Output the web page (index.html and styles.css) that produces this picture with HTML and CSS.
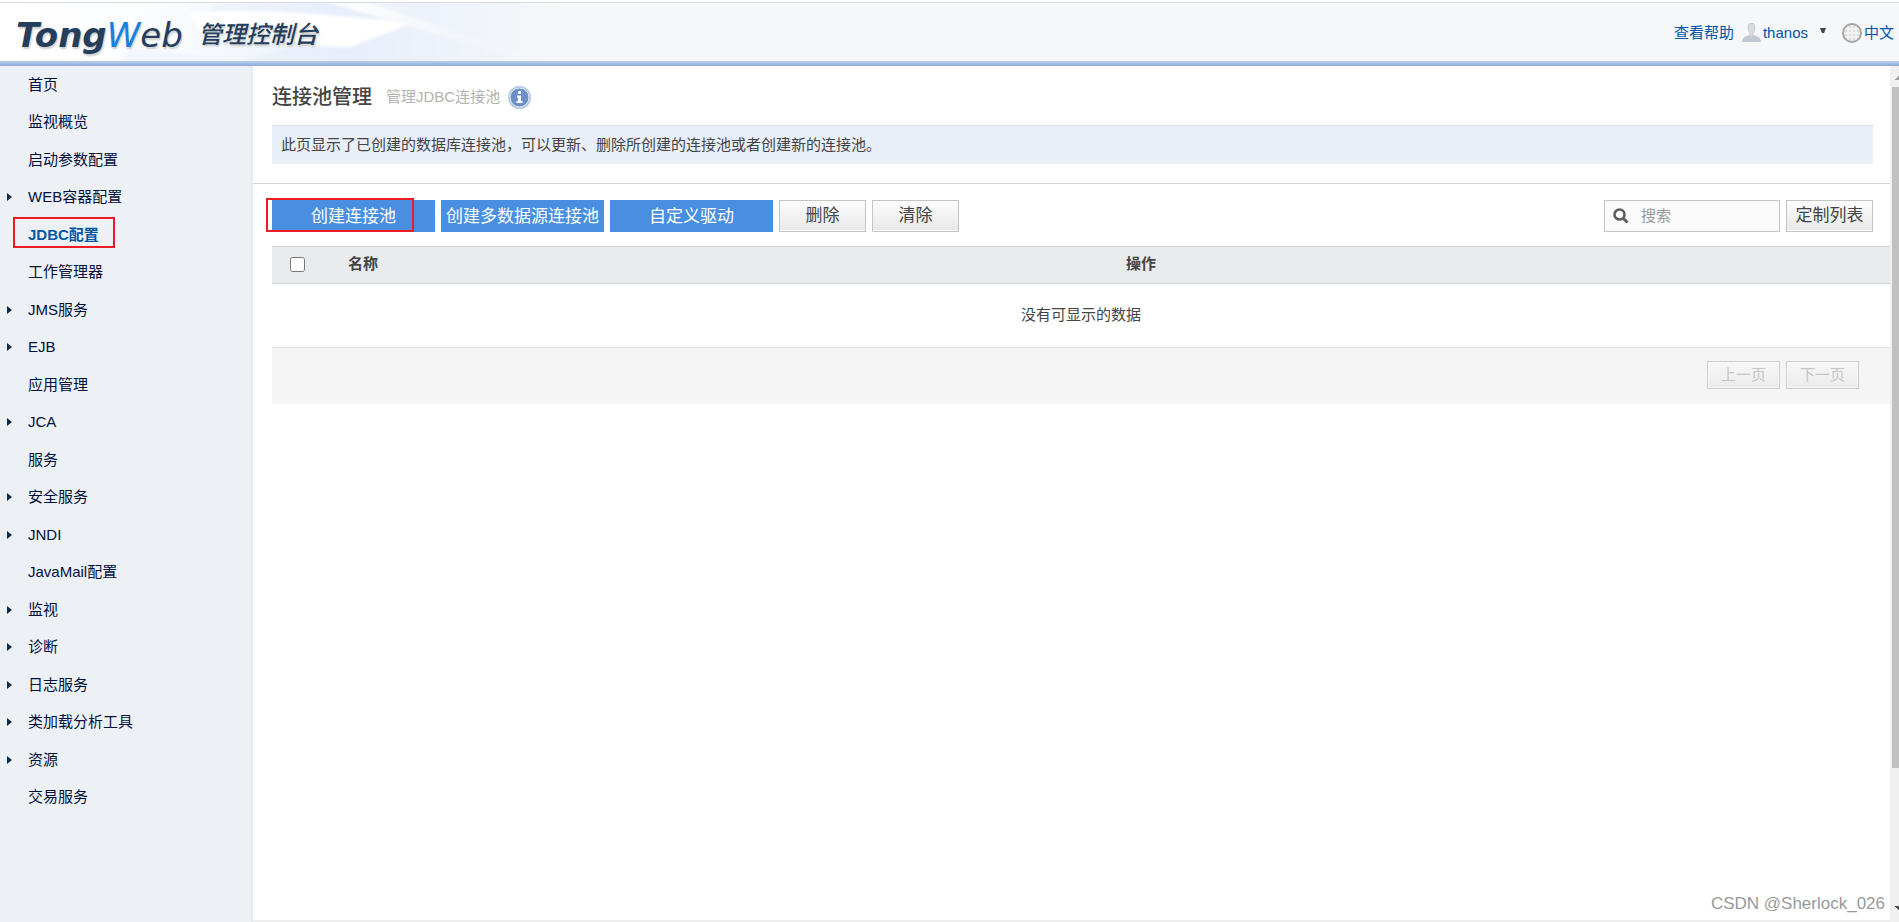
FILE: index.html
```html
<!DOCTYPE html>
<html lang="zh-CN">
<head>
<meta charset="utf-8">
<title>TongWeb 管理控制台</title>
<link rel="stylesheet" href="styles.css">
</head>
<body>
<header class="topbar">
  <svg class="topbar-art" width="560" height="58" viewBox="0 0 560 58" aria-hidden="true">
    <defs>
      <linearGradient id="haze" x1="0" x2="1" y1="0" y2="0"><stop offset="0" stop-color="#fff"/><stop offset=".25" stop-color="#fcfdff"/><stop offset=".5" stop-color="#f0f4fc"/><stop offset=".75" stop-color="#edf2fb"/><stop offset="1" stop-color="#f6f7f9"/></linearGradient>
      <linearGradient id="beam" gradientUnits="userSpaceOnUse" x1="180" x2="560" y1="0" y2="0"><stop offset="0" stop-color="#e9effb" stop-opacity=".3"/><stop offset=".45" stop-color="#e7eefb"/><stop offset="1" stop-color="#f6f7f9"/></linearGradient>
      <linearGradient id="streak" gradientUnits="userSpaceOnUse" x1="330" x2="540" y1="0" y2="0"><stop offset="0" stop-color="#fff"/><stop offset="1" stop-color="#f6f7f9" stop-opacity="0"/></linearGradient>
      <filter id="soft"><feGaussianBlur stdDeviation="1.500"/></filter>
    </defs>
    <rect width="560" height="58" fill="url(#haze)"/>
    <g filter="url(#soft)">
      <path d="M350 46L430 20L560 58H240L300 42Z" fill="url(#beam)"/>
      <path d="M220 0H345L425 22L350 46L200 12Z" fill="url(#beam)"/>
      <path d="M190 10C270 4 350 14 412 20L350 44L330 43L200 30Z" fill="#fff"/>
      <path d="M330 0H370L540 56H520Z" fill="url(#streak)"/>
      <path d="M130 45L230 55L260 60H120Z" fill="#f2f6fd"/>
    </g>
  </svg>
  <h1 class="logo"><span class="logo-name">Tong<span class="logo-web"><span class="logo-w">W</span>eb</span></span><span class="logo-title">管理控制台</span></h1>
  <nav class="topbar-links">
    <a href="#help">查看帮助</a>
    <a class="user" href="#user">
      <svg width="19" height="19" viewBox="0 0 19 19" aria-hidden="true"><path d="M9.500 0C6.500 0 5.500 2 5.800 5C6 8 7 9 7.500 10V12C5 13 0 13.500 0 19H19C19 13.500 14 13 11.500 12V10C12.500 9 13.200 8 13.300 5C13.500 2 12.500 0 9.500 0Z" fill="#c3c8d1"/><path d="M9.500 1C7 1 6.500 3 6.800 5C7 8 8 9 8.500 10.500V13L9.500 14L10.500 13V10.500C11.500 9 12.200 7 12.300 5C12.500 3 12 1 9.500 1Z" fill="#dcdcdc"/></svg>
      <span>thanos</span>
      <svg class="caret" width="6" height="6" viewBox="0 0 6 6" aria-hidden="true"><path d="M0 0H6L4 5H2Z" fill="#444"/></svg>
    </a>
    <a class="lang" href="#lang">
      <svg width="20" height="20" viewBox="0 0 20 20" aria-hidden="true"><circle cx="10" cy="10" r="9" fill="#dedede" stroke="#a2a2a2" stroke-width="1.800"/><path d="M10 2V18M2 10H18M3 6H17M3 14H17M6 3V17M14 3V17" stroke="#fff" fill="none"/></svg>
      <span>中文</span>
    </a>
  </nav>
</header>
<div class="shell">
  <nav class="sidebar" aria-label="主菜单">
    <ul class="menu">
      <li><a href="#m">首页</a></li>
      <li><a href="#m">监视概览</a></li>
      <li><a href="#m">启动参数配置</a></li>
      <li class="parent"><a href="#m">WEB容器配置</a></li>
      <li class="current"><a href="#m">JDBC配置</a></li>
      <li><a href="#m">工作管理器</a></li>
      <li class="parent"><a href="#m">JMS服务</a></li>
      <li class="parent"><a href="#m">EJB</a></li>
      <li><a href="#m">应用管理</a></li>
      <li class="parent"><a href="#m">JCA</a></li>
      <li><a href="#m">服务</a></li>
      <li class="parent"><a href="#m">安全服务</a></li>
      <li class="parent"><a href="#m">JNDI</a></li>
      <li><a href="#m">JavaMail配置</a></li>
      <li class="parent"><a href="#m">监视</a></li>
      <li class="parent"><a href="#m">诊断</a></li>
      <li class="parent"><a href="#m">日志服务</a></li>
      <li class="parent"><a href="#m">类加载分析工具</a></li>
      <li class="parent"><a href="#m">资源</a></li>
      <li><a href="#m">交易服务</a></li>
    </ul>
  </nav>
  <main class="content">
    <section class="intro">
      <div class="heading">
        <h2>连接池管理</h2>
        <span class="subtitle">管理JDBC连接池</span>
        <svg width="23" height="23" viewBox="0 0 23 23" aria-hidden="true"><circle cx="11.500" cy="11.500" r="11.500" fill="#b4c8e4"/><circle cx="11.500" cy="11.500" r="9.500" fill="#6b8fc6" stroke="#e4ecf7"/><path d="M10 5H13V8H10ZM9 9.500H13V15H14.500V17H8.500V15H10V11.500H9Z" fill="#fff"/></svg>
      </div>
      <p class="notice">此页显示了已创建的数据库连接池，可以更新、删除所创建的连接池或者创建新的连接池。</p>
    </section>
    <div class="toolbar">
      <div class="create"><button class="btn primary">创建连接池</button><span class="highlight"></span></div>
      <button class="btn primary">创建多数据源连接池</button>
      <button class="btn primary">自定义驱动</button>
      <button class="btn plain">删除</button>
      <button class="btn plain">清除</button>
      <div class="search">
        <svg width="16" height="16" viewBox="0 0 16 16" aria-hidden="true"><circle cx="6.500" cy="6.500" r="5" fill="none" stroke="#5e5e5e" stroke-width="2.600"/><path d="M10 10L14.500 14.500" stroke="#5e5e5e" stroke-width="3"/></svg>
        <input type="text" placeholder="搜索" aria-label="搜索">
      </div>
      <button class="btn plain">定制列表</button>
    </div>
    <table class="grid">
      <thead><tr><th class="check"><input type="checkbox" aria-label="全选"></th><th class="name">名称</th><th>操作</th></tr></thead>
      <tbody><tr><td colspan="3">没有可显示的数据</td></tr></tbody>
    </table>
    <div class="pager"><button class="page" disabled>上一页</button><button class="page" disabled>下一页</button></div>
    <div class="watermark">CSDN @Sherlock_026</div>
  </main>
  <div class="scrollbar" aria-hidden="true"><span class="arrow up"></span><span class="thumb"></span><span class="arrow down"></span></div>
</div>
</body>
</html>
```
FILE: styles.css
```css
*, *::before, *::after { box-sizing: border-box; }
body {
  margin: 0;
  height: 100vh;
  display: flex;
  flex-direction: column;
  overflow: hidden;
  background: #fff;
  color: #444;
  font: 15px/20px "Liberation Sans", "Noto Sans CJK SC", sans-serif;
}
a { color: inherit; text-decoration: none; }
button, input { font: inherit; color: inherit; }

.topbar {
  position: relative;
  display: flex;
  justify-content: space-between;
  align-items: center;
  height: 66px;
  flex: none;
  padding: 0 5px 5px 16px;
  background: linear-gradient(#b9d0ee, #8eaad6) bottom / 100% 5px no-repeat, #f6f7f9;
  box-shadow: inset 0 2px #fff, inset 0 3px #d8dbe0;
}
.topbar-art { position: absolute; left: 0; top: 3px; }
.logo {
  position: relative;
  display: flex;
  align-items: center;
  margin: 8px 0 0;
  color: #243e5c;
  font-size: 24px;
  line-height: 36px;
  font-style: italic;
  text-shadow: 1px 2px 2px #ccc;
}
.logo-name { width: 182px; font: italic bold 34px/36px "DejaVu Sans", sans-serif; }
.logo-web { font-weight: normal; }
.logo-w { color: #1583dc; }
.logo-title { font-weight: 500; }
.topbar-links { position: relative; display: flex; align-items: center; color: #05a; padding-top: 4px; gap: 8px; }
.topbar-links a { display: flex; align-items: center; gap: 2px; }
.topbar-links .user { margin-right: 8px; }
.caret { margin: 0 0 4px 10px; }

.shell { display: flex; flex: 1; min-height: 0; }
.sidebar {
  width: 253px;
  flex: none;
  background: #edf1f6;
  border-right: 2px solid #e6eaf2;
}
.menu {
  display: grid;
  grid-auto-rows: 1fr;
  height: 750px;
  margin: 0;
  padding: 0;
  list-style: none;
  color: #00103c;
}
.menu li { position: relative; display: flex; align-items: center; padding-left: 28px; }
.parent::before {
  content: "";
  position: absolute;
  left: 7px;
  border: 4px solid transparent;
  border-left: 5px solid #0a2c48;
  border-right: 0;
}
.current { color: #0558a6; font-weight: bold; }
.current::after {
  content: "";
  position: absolute;
  left: 13px;
  top: 1px;
  width: 102px;
  height: 31px;
  border: 2px solid #ed1c24;
}

.content { position: relative; flex: 1; min-width: 0; border-bottom: 2px solid #eee; }
.intro { padding: 19px 17px 19px 19px; border-bottom: 1px solid #d6d6da; }
.heading { display: flex; align-items: center; height: 24px; }
.heading h2 { margin: 0; font-size: 20px; font-weight: 500; line-height: 24px; }
.subtitle { margin: 0 8px 0 14px; color: #b2b2b2; }
.notice {
  margin: 16px 0 0;
  padding: 9px;
  background: #e8eff8;
  border-top: 1px dotted #ccd3dc;
}
.toolbar { display: flex; gap: 6px; padding: 16px 17px 14px 19px; }
.create { position: relative; display: flex; }
.highlight {
  position: absolute;
  left: -6px;
  top: -2px;
  width: 148px;
  height: 34px;
  border: 2px solid #ed1c24;
}
.btn { height: 32px; padding: 0; border: 0; font-size: 17px; line-height: 24px; white-space: nowrap; }
.primary { width: 163px; padding-top: 2px; background: #488fe1; color: #fff; }
.plain {
  width: 87px;
  border: 1px solid #c4c4c4;
  background: linear-gradient(#fcfcfc, #e8e8e8);
  box-shadow: inset 0 -1px #fff;
}
.search {
  display: flex;
  align-items: center;
  gap: 12px;
  width: 176px;
  margin-left: auto;
  padding: 0 8px;
  border: 1px solid #c4c4c4;
  background: #fbfbfb;
}
.search svg { flex: none; }
.search input { width: 100%; min-width: 0; padding: 0; border: 0; background: none; outline: 0; }
.search input::placeholder { color: #999; }

.grid { width: calc(100% - 19px); margin-left: 19px; border-collapse: collapse; table-layout: fixed; }
.grid th {
  height: 37px;
  padding: 0 0 2px;
  background: #e9eaec;
  border: solid #d0d2d4;
  border-width: 1px 0;
}
.grid .check { width: 76px; text-align: left; padding-left: 18px; }
.check input { display: block; width: 15px; height: 15px; margin: 0; }
.grid .name { width: 45%; text-align: left; }
.grid th:last-child { text-align: left; padding-left: 50px; }
.grid td { height: 63px; padding: 0; text-align: center; }
.pager {
  display: flex;
  justify-content: flex-end;
  gap: 6px;
  margin-left: 19px;
  padding: 13px 31px 15px;
  background: #f5f5f5;
  border-top: 1px solid #e2e2e2;
}
.page {
  width: 73px;
  height: 28px;
  padding: 0;
  border: 1px solid #ccc;
  background: linear-gradient(#f7f7f7, #ebebeb);
  box-shadow: inset 0 0 0 1px #fafafa;
  color: #c6c6c6;
}
.watermark {
  position: absolute;
  right: 5px;
  bottom: 4px;
  font-size: 17px;
  line-height: 24px;
  color: #999;
}
.scrollbar {
  display: flex;
  flex-direction: column;
  align-items: flex-end;
  width: 9px;
  flex: none;
  background: #f0f0f0;
  overflow: hidden;
}
.thumb { width: 7px; height: 79.500%; background: #c1c1c1; }
.arrow { flex: none; width: 4px; height: 4px; margin: 10px 0 7px; }
.up { background: linear-gradient(135deg, transparent 50%, #a3a3a3 50%); }
.down { margin: auto 0 12px; background: linear-gradient(45deg, transparent 50%, #505050 50%); }
```
